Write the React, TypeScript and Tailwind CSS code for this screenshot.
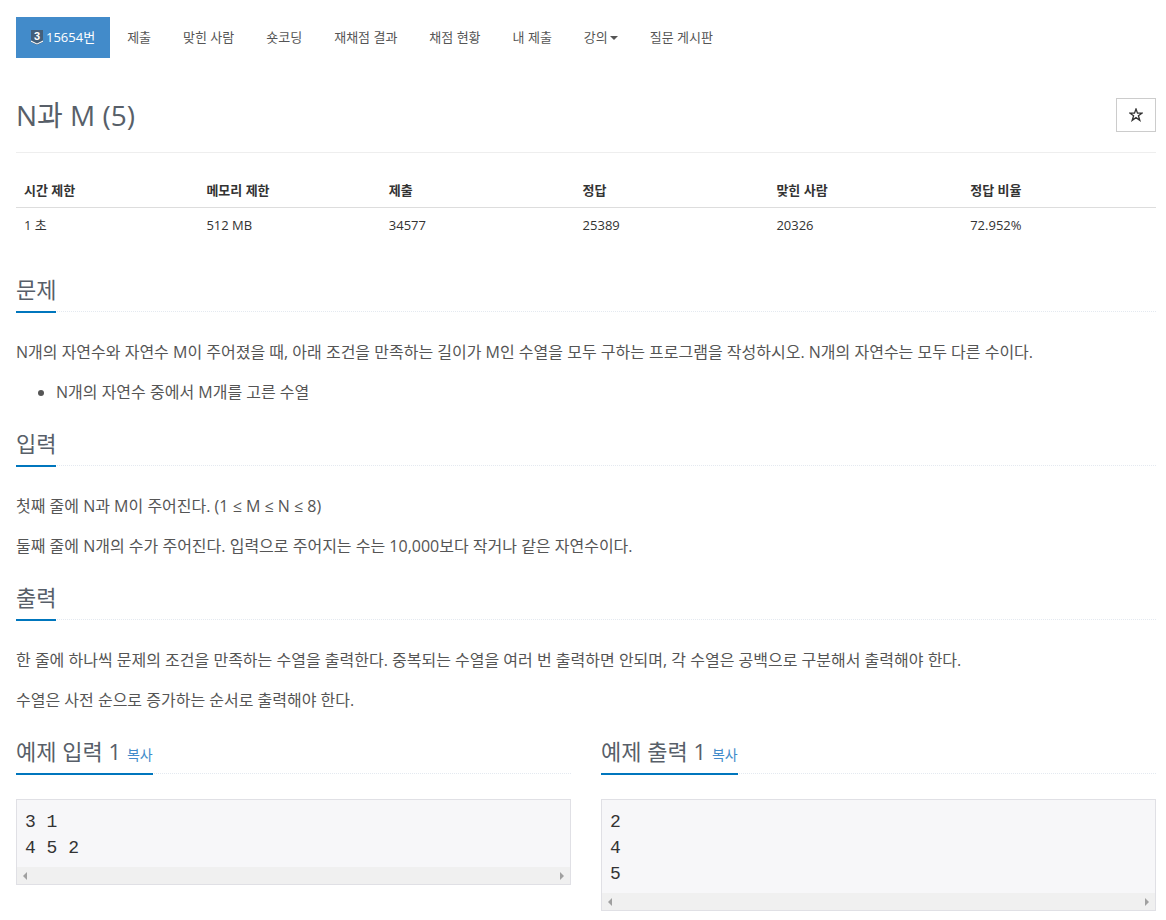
import type { ReactNode } from "react";

const tabs = ["제출", "맞힌 사람", "숏코딩", "재채점 결과", "채점 현황", "내 제출"];

const stats = [
     { label: "시간 제한", value: "1 초", width: "w-[16%]" },
     { label: "메모리 제한", value: "512 MB", width: "w-[16%]" },
     { label: "제출", value: "34577", width: "w-[17%]" },
     { label: "정답", value: "25389", width: "w-[17%]" },
     { label: "맞힌 사람", value: "20326", width: "w-[17%]" },
     { label: "정답 비율", value: "72.952%", width: "w-[17%]" },
];

function TierBadge() {
     return (
          <svg viewBox="0 0 12 15" className="w-3 h-[15px]" aria-hidden="true">
               <path d="M0 0h12v12l-6 3-6-3z" fill="#435f7a" />
               <path d="M0 10.6l6 2.8 6-2.8v1.2l-6 2.8-6-2.8z" fill="#fff" />
               <text x="6" y="10" textAnchor="middle" fontSize="11" fontWeight="700" fill="#fff" fontFamily="Liberation Sans, sans-serif">
                    3
               </text>
          </svg>
     );
}

function NavItem({ children }: { children: ReactNode }) {
     return (
          <li>
               <a href="#" className="flex items-center px-[15px] py-2.5 text-[#555]">
                    {children}
               </a>
          </li>
     );
}

function Headline({ title, copy }: { title: string; copy?: boolean }) {
     return (
          <div className="flex border-b border-dotted border-[#e4e9f0] mb-[25px]">
               <div className="-mb-0.5 h-9 border-b-2 border-[#0076bd] flex items-baseline gap-1.5">
                    <h2 className="text-[22px] leading-6 font-normal text-[#585f69]">{title}</h2>
                    {copy && (
                         <button type="button" className="text-[14px] leading-6 font-normal text-[#428bca]">
                              복사
                         </button>
                    )}
               </div>
          </div>
     );
}

function Section({ title, children }: { title: string; children: ReactNode }) {
     return (
          <section className="mb-6 text-[16px] leading-[30px] text-[#555]">
               <Headline title={title} />
               <div className="flex flex-col gap-2.5">{children}</div>
          </section>
     );
}

function Sample({ title, data }: { title: string; data: string }) {
     return (
          <section>
               <Headline title={title} copy />
               <div className="border border-[#e0e0e5] bg-[#f7f7f9]">
                    <pre className="px-2 pt-[9px] pb-1.5 font-['Liberation_Mono',monospace] text-[18px] leading-[26px] text-[#333]">{data}</pre>
                    <div className="h-[17px] bg-[#f0f0f0] flex items-center justify-between px-1.5">
                         <svg viewBox="0 0 4 8" className="w-1 h-2" fill="#a0a0a0" aria-hidden="true">
                              <path d="M4 0v8L0 4z" />
                         </svg>
                         <svg viewBox="0 0 4 8" className="w-1 h-2" fill="#a0a0a0" aria-hidden="true">
                              <path d="M0 0v8l4-4z" />
                         </svg>
                    </div>
               </div>
          </section>
     );
}

export default function App() {
     return (
          <main className="bg-white pt-[17px] pl-4 pr-2.5 pb-2 font-['Open_Sans','Noto_Sans_CJK_KR',sans-serif] text-[13px] leading-[21px] text-[#333]" lang="ko">
               <nav>
                    <ul className="flex flex-wrap gap-0.5">
                         <li>
                              <a href="#" className="flex items-center gap-[3px] px-[15px] py-2.5 bg-[#428bca] text-white">
                                   <TierBadge />
                                   15654번
                              </a>
                         </li>
                         {tabs.map((tab) => (
                              <NavItem key={tab}>{tab}</NavItem>
                         ))}
                         <NavItem>
                              강의
                              <svg viewBox="0 0 8 4" className="w-2 h-1 ml-0.5" fill="#555" aria-hidden="true">
                                   <path d="M0 0h8L4 4z" />
                              </svg>
                         </NavItem>
                         <NavItem>질문 게시판</NavItem>
                    </ul>
               </nav>

               <header className="mt-10 pb-5 flex items-start justify-between border-b border-[#eee]">
                    <h1 className="text-[28px] leading-[34px] font-normal text-[#585f69]">N과 M (5)</h1>
                    <button type="button" aria-label="즐겨찾기" className="w-10 h-[34px] border border-[#ccc] flex items-center justify-center text-[#333]">
                         <svg viewBox="0 0 14 14" className="w-3.5 h-3.5" fill="none" stroke="currentColor" strokeWidth="1.3" aria-hidden="true">
                              <path d="M7 1l1.5 4.2h4.5L9.4 7.8l1.4 4.5L7 9.6l-3.8 2.7 1.4-4.5L1 5.2h4.5z" />
                         </svg>
                    </button>
               </header>

               <table className="w-full table-fixed mt-5 mb-[35px] leading-[18px] text-left">
                    <thead>
                         <tr className="border-b border-[#ddd]">
                              {stats.map((stat) => (
                                   <th key={stat.label} className={`${stat.width} p-2 font-bold`}>
                                        {stat.label}
                                   </th>
                              ))}
                         </tr>
                    </thead>
                    <tbody>
                         <tr>
                              {stats.map((stat) => (
                                   <td key={stat.label} className="p-2">
                                        {stat.value}
                                   </td>
                              ))}
                         </tr>
                    </tbody>
               </table>

               <Section title="문제">
                    <p>N개의 자연수와 자연수 M이 주어졌을 때, 아래 조건을 만족하는 길이가 M인 수열을 모두 구하는 프로그램을 작성하시오. N개의 자연수는 모두 다른 수이다.</p>
                    <ul className="list-disc pl-10">
                         <li>N개의 자연수 중에서 M개를 고른 수열</li>
                    </ul>
               </Section>

               <Section title="입력">
                    <p>첫째 줄에 N과 M이 주어진다. (1 ≤ M ≤ N ≤ 8)</p>
                    <p>둘째 줄에 N개의 수가 주어진다. 입력으로 주어지는 수는 10,000보다 작거나 같은 자연수이다.</p>
               </Section>

               <Section title="출력">
                    <p>한 줄에 하나씩 문제의 조건을 만족하는 수열을 출력한다. 중복되는 수열을 여러 번 출력하면 안되며, 각 수열은 공백으로 구분해서 출력해야 한다.</p>
                    <p>수열은 사전 순으로 증가하는 순서로 출력해야 한다.</p>
               </Section>

               <div className="grid grid-cols-2 gap-[30px] items-start">
                    <Sample title="예제 입력 1" data={"3 1\n4 5 2"} />
                    <Sample title="예제 출력 1" data={"2\n4\n5"} />
               </div>
          </main>
     );
}
